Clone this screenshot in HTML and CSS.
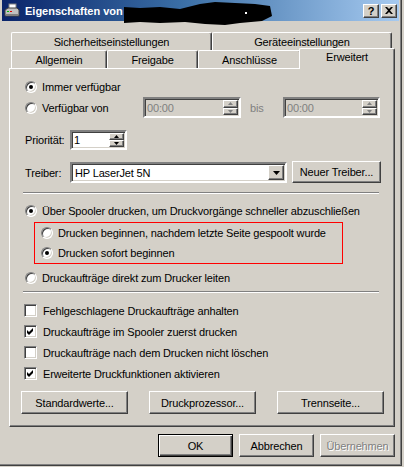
FILE: index.html
```html
<!DOCTYPE html>
<html lang="de">
<head>
    <meta charset="UTF-8">
    <title>Eigenschaften</title>
    <link rel="stylesheet" href="styles.css">
</head>
<body>
    <div class="window">
        <div class="titlebar">
            <svg class="title-icon" width="16" height="16" viewBox="0 0 16 16">
                <rect x="5" y="1" width="7" height="6" fill="#fff" stroke="#808080"/>
                <path d="M1 7 L4 5 L13 5 L15 7 L15 13 L1 13 Z" fill="#c0c0c0" stroke="#404040"/>
                <rect x="2" y="11" width="12" height="2" fill="#808080"/>
                <rect x="3" y="8" width="2" height="1" fill="#00c000"/>
                <rect x="6" y="8" width="2" height="1" fill="#e00000"/>
            </svg>
            <span class="title-text">Eigenschaften von</span>
            <svg class="redact" width="150" height="25" viewBox="0 0 150 25">
                <path d="M0 7 L16 8 L36 7 L56 9 L76 4 L91 2 L111 3 L131 4 L146 6 L148 16 L138 21 L116 23 L101 25 L81 24 L61 22 L36 23 L16 22 L0 23 Z" fill="#000"/>
                <rect x="121" y="12" width="2" height="2" fill="#fff"/>
            </svg>
            <div class="title-buttons">
                <span class="tbtn">?</span>
                <span class="tbtn">
                    <svg width="8" height="7" viewBox="0 0 8 7">
                        <path d="M0 0 H2 L4 2 L6 0 H8 L5 3.5 L8 7 H6 L4 5 L2 7 H0 L3 3.5 Z" fill="#000"/>
                    </svg>
                </span>
            </div>
        </div>

        <div class="tabs">
            <div class="tabrow">
                <div class="tab tab-sec">Sicherheitseinstellungen</div>
                <div class="tab tab-dev">Geräteeinstellungen</div>
            </div>
            <div class="tabrow">
                <div class="tab tab-gen">Allgemein</div>
                <div class="tab tab-share">Freigabe</div>
                <div class="tab tab-ports">Anschlüsse</div>
                <div class="tab tab-adv selected">Erweitert</div>
            </div>
        </div>

        <div class="panel">
            <div class="row">
                <span class="radio checked"></span>
                <span class="label">Immer verfügbar</span>
            </div>
            <div class="row row-avail">
                <div class="avail-label">
                    <span class="radio"></span>
                    <span class="label">Verfügbar von</span>
                </div>
                <div class="field time disabled">
                    <span class="value">00:00</span>
                    <div class="spin">
                        <span class="spin-btn"><svg width="5" height="3"><polygon points="0,3 5,3 2.5,0" fill="#808080"/></svg></span>
                        <span class="spin-btn"><svg width="5" height="3"><polygon points="0,0 5,0 2.5,3" fill="#808080"/></svg></span>
                    </div>
                </div>
                <span class="bis">bis</span>
                <div class="field time time2 disabled">
                    <span class="value">00:00</span>
                    <div class="spin">
                        <span class="spin-btn"><svg width="5" height="3"><polygon points="0,3 5,3 2.5,0" fill="#808080"/></svg></span>
                        <span class="spin-btn"><svg width="5" height="3"><polygon points="0,0 5,0 2.5,3" fill="#808080"/></svg></span>
                    </div>
                </div>
            </div>
            <div class="row row-prio">
                <span class="field-label">Priorität:</span>
                <div class="field prio">
                    <span class="value">1</span>
                    <div class="spin">
                        <span class="spin-btn"><svg width="5" height="3"><polygon points="0,3 5,3 2.5,0" fill="#000"/></svg></span>
                        <span class="spin-btn"><svg width="5" height="3"><polygon points="0,0 5,0 2.5,3" fill="#000"/></svg></span>
                    </div>
                </div>
            </div>
            <div class="row row-driver">
                <span class="field-label">Treiber:</span>
                <div class="field combo">
                    <span class="value">HP LaserJet 5N</span>
                    <span class="combo-btn"><svg width="7" height="4"><polygon points="0,0 7,0 3.5,4" fill="#000"/></svg></span>
                </div>
                <span class="btn btn-driver">Neuer Treiber...</span>
            </div>

            <div class="separator"></div>

            <div class="row row-spool">
                <span class="radio checked"></span>
                <span class="label">Über Spooler drucken, um Druckvorgänge schneller abzuschließen</span>
            </div>
            <div class="marked">
                <div class="row">
                    <span class="radio"></span>
                    <span class="label">Drucken beginnen, nachdem letzte Seite gespoolt wurde</span>
                </div>
                <div class="row">
                    <span class="radio checked"></span>
                    <span class="label">Drucken sofort beginnen</span>
                </div>
            </div>
            <div class="row row-direct">
                <span class="radio"></span>
                <span class="label">Druckaufträge direkt zum Drucker leiten</span>
            </div>

            <div class="separator sep2"></div>

            <div class="checks">
                <div class="check-row">
                    <span class="checkbox"></span>
                    <span class="label">Fehlgeschlagene Druckaufträge anhalten</span>
                </div>
                <div class="check-row">
                    <span class="checkbox checked"><svg width="9" height="9" viewBox="0 0 9 9"><polygon points="1,3 3,5 7,1 7,4 3,8 1,6" fill="#000"/></svg></span>
                    <span class="label">Druckaufträge im Spooler zuerst drucken</span>
                </div>
                <div class="check-row">
                    <span class="checkbox"></span>
                    <span class="label">Druckaufträge nach dem Drucken nicht löschen</span>
                </div>
                <div class="check-row">
                    <span class="checkbox checked"><svg width="9" height="9" viewBox="0 0 9 9"><polygon points="1,3 3,5 7,1 7,4 3,8 1,6" fill="#000"/></svg></span>
                    <span class="label">Erweiterte Druckfunktionen aktivieren</span>
                </div>
            </div>

            <div class="panel-buttons">
                <span class="btn btn-wide">Standardwerte...</span>
                <span class="btn btn-wide">Druckprozessor...</span>
                <span class="btn btn-wide">Trennseite...</span>
            </div>
        </div>

        <div class="footer">
            <span class="btn btn-footer default">OK</span>
            <span class="btn btn-footer">Abbrechen</span>
            <span class="btn btn-footer disabled">Übernehmen</span>
        </div>
    </div>
</body>
</html>
```

FILE: styles.css
```css
body {
    margin: 0;
    width: 404px;
    height: 467px;
    overflow: hidden;
    background-color: #d4d0c8;
    font-family: "Liberation Sans", Arial, sans-serif;
    font-size: 11px;
    letter-spacing: -0.15px;
    color: #000;
}

.window {
    box-sizing: border-box;
    width: 402px;
    height: 466px;
    border-right: 1px solid #404040;
    border-bottom: 1px solid #404040;
    box-shadow: inset -1px -1px #808080;
}

/* title bar */
.titlebar {
    position: relative;
    display: flex;
    align-items: center;
    height: 21px;
    margin: 0 2px 0 2px;
    background: linear-gradient(to right, #0a246a, #3a6ea5 45%, #a6caf0);
}

.title-icon {
    margin-left: 2px;
}

.title-text {
    margin-left: 5px;
    color: #fff;
    font-weight: bold;
    font-size: 11px;
    letter-spacing: 0;
}

.redact {
    position: absolute;
    left: 122px;
    top: 0;
}

.title-buttons {
    display: flex;
    gap: 2px;
    margin-left: auto;
    margin-right: 2px;
}

.tbtn {
    box-sizing: border-box;
    display: flex;
    align-items: center;
    justify-content: center;
    width: 16px;
    height: 14px;
    background-color: #d4d0c8;
    border: 1px solid;
    border-color: #fff #404040 #404040 #fff;
    box-shadow: inset -1px -1px #808080;
    font-weight: bold;
    font-size: 11px;
    letter-spacing: 0;
}

/* tabs */
.tabs {
    margin: 11px 0 0 9px;
}

.tabrow {
    display: flex;
    align-items: flex-end;
    padding-left: 2px;
    height: 18px;
}

.tab {
    box-sizing: border-box;
    display: flex;
    align-items: center;
    justify-content: center;
    height: 18px;
    padding-top: 1px;
    border-top: 1px solid #fff;
    border-left: 1px solid #fff;
    border-right: 1px solid #404040;
    border-top-left-radius: 2px;
    border-top-right-radius: 2px;
    box-shadow: inset -1px 0 #808080;
    background-color: #d4d0c8;
}

.tab-sec { width: 201px; }
.tab-dev { width: 180px; }
.tab-gen { width: 96px; }
.tab-share { width: 91px; }
.tab-ports { width: 103px; }

.tab.selected {
    position: relative;
    z-index: 1;
    width: 96px;
    height: 21px;
    margin: 0 -2px -1px -2px;
    padding-top: 0;
    padding-bottom: 4px;
}

/* panel */
.panel {
    box-sizing: border-box;
    width: 386px;
    height: 359px;
    margin-left: 9px;
    padding-top: 8px;
    border: 1px solid;
    border-color: #fff #404040 #404040 #fff;
    box-shadow: inset -1px -1px #808080;
}

.row {
    display: flex;
    align-items: center;
    gap: 5px;
    height: 20px;
    padding-left: 15px;
}

.radio {
    box-sizing: border-box;
    position: relative;
    flex: none;
    width: 12px;
    height: 12px;
    border-radius: 50%;
    background-color: #fff;
    border: 1px solid;
    border-color: #808080 #fff #fff #808080;
    box-shadow: inset 1px 1px #404040, inset -1px -1px #d4d0c8;
}

.radio.checked::after {
    content: "";
    position: absolute;
    left: 3px;
    top: 3px;
    width: 4px;
    height: 4px;
    border-radius: 50%;
    background-color: #000;
}

.row-avail {
    gap: 0;
    height: 21px;
}

.avail-label {
    display: flex;
    align-items: center;
    gap: 5px;
    width: 118px;
}

.field {
    box-sizing: border-box;
    display: flex;
    align-items: center;
    background-color: #fff;
    border: 2px solid;
    border-color: #808080 #fff #fff #808080;
    box-shadow: inset 1px 1px #404040, inset -1px -1px #d4d0c8;
}

.field .value {
    flex: 1;
    padding-left: 2px;
}

.field.disabled {
    background-color: #d4d0c8;
    color: #808080;
}

.time {
    width: 98px;
    height: 21px;
}

.time2 {
    width: 97px;
}

.bis {
    width: 33px;
    margin-left: 9px;
    color: #808080;
}

.spin {
    display: flex;
    flex-direction: column;
    align-self: stretch;
    margin: 1px 1px 1px 0;
}

.spin-btn {
    box-sizing: border-box;
    display: flex;
    align-items: center;
    justify-content: center;
    width: 15px;
    flex: 1;
    background-color: #d4d0c8;
    border: 1px solid;
    border-color: #fff #404040 #404040 #fff;
    box-shadow: inset -1px -1px #808080;
}

.field-label {
    width: 40px;
}

.row-prio {
    margin-top: 12px;
}

.prio {
    width: 57px;
    height: 20px;
}

.row-driver {
    margin-top: 11px;
    height: 23px;
}

.combo {
    width: 217px;
    height: 21px;
}

.combo .value {
    padding-left: 3px;
}

.combo-btn {
    box-sizing: border-box;
    display: flex;
    align-items: center;
    justify-content: center;
    align-self: stretch;
    width: 16px;
    margin: 1px 1px 1px 0;
    background-color: #d4d0c8;
    border: 1px solid;
    border-color: #fff #404040 #404040 #fff;
    box-shadow: inset -1px -1px #808080;
}

.btn {
    box-sizing: border-box;
    display: flex;
    align-items: center;
    justify-content: center;
    height: 23px;
    background-color: #d4d0c8;
    border: 1px solid;
    border-color: #fff #404040 #404040 #fff;
    box-shadow: inset -1px -1px #808080;
}

.btn-driver {
    width: 89px;
    height: 22px;
    align-self: flex-start;
}

.separator {
    width: 356px;
    margin: 8px 0 0 13px;
    border-top: 1px solid #808080;
    border-bottom: 1px solid #fff;
}

.row-spool {
    margin-top: 7px;
}

.marked {
    box-sizing: border-box;
    width: 309px;
    height: 42px;
    margin: 1px 0 0 24px;
    border: 1px solid #ff0000;
}

.marked .row {
    padding-left: 6px;
}

.row-direct {
    margin-top: 4px;
}

.separator.sep2 {
    margin-top: 3px;
}

.checks {
    margin-top: 7px;
}

.check-row {
    display: flex;
    align-items: center;
    gap: 6px;
    height: 21px;
    padding-left: 14px;
}

.checkbox {
    box-sizing: border-box;
    display: flex;
    align-items: center;
    justify-content: center;
    width: 13px;
    height: 13px;
    background-color: #fff;
    border: 1px solid;
    border-color: #808080 #fff #fff #808080;
    box-shadow: inset 1px 1px #404040, inset -1px -1px #d4d0c8;
}

.panel-buttons {
    display: flex;
    gap: 21px;
    margin-top: 7px;
    padding-left: 11px;
}

.btn-wide {
    width: 107px;
}

/* dialog buttons */
.footer {
    display: flex;
    justify-content: flex-end;
    gap: 6px;
    width: 395px;
    margin-top: 7px;
}

.btn-footer {
    width: 75px;
}

.btn.default {
    border-color: #000;
    box-shadow: inset 1px 1px #fff, inset -1px -1px #404040, inset -2px -2px #808080;
}

.btn.disabled {
    color: #808080;
    text-shadow: 1px 1px #fff;
}
```
